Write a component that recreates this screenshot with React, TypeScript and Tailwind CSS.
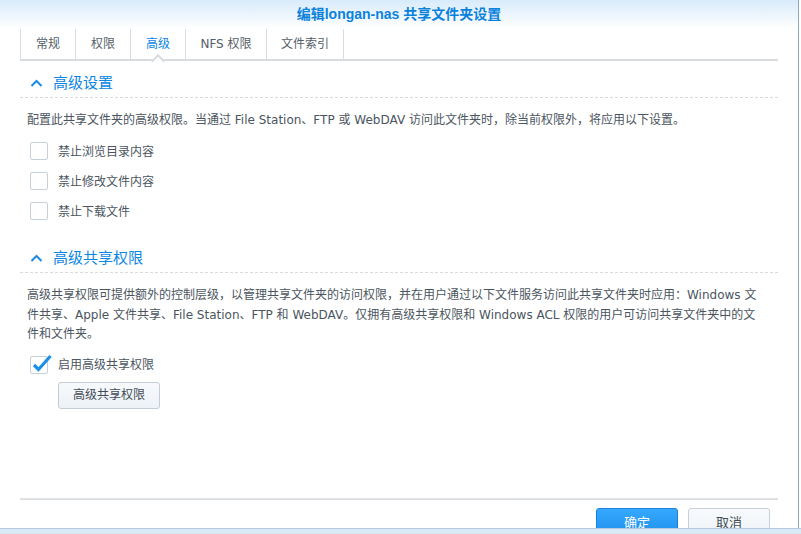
import { useState } from 'react'

const TABS = [
  { label: '常规', w: 'w-[55px]' },
  { label: '权限', w: 'w-[55px]' },
  { label: '高级', w: 'w-[55px]' },
  { label: 'NFS 权限', w: 'w-[81px]' },
  { label: '文件索引', w: 'w-[77px]' },
]

const ADV_OPTIONS = ['禁止浏览目录内容', '禁止修改文件内容', '禁止下载文件']

function Chevron() {
  return (
    <svg width="13" height="8" viewBox="0 0 13 8" className="mr-[10px] ml-[10px]">
      <path d="M1.5 7 L6.5 2 L11.5 7" fill="none" stroke="#1a8be4" strokeWidth="2" />
    </svg>
  )
}

function SectionHeader({ title }: { title: string }) {
  return (
    <div className="flex items-center h-[20px] pb-[4px] box-content border-b border-dashed border-[#d6dbe0]">
      <Chevron />
      <span className="text-[15px] text-[#0b86e3] leading-[20px]">{title}</span>
    </div>
  )
}

function Checkbox({ checked, onToggle }: { checked: boolean; onToggle: () => void }) {
  return (
    <button
      onClick={onToggle}
      className="relative w-[18px] h-[18px] border border-[#c5d0da] rounded-[2px] bg-white shrink-0"
    >
      {checked && (
        <svg width="20" height="18" viewBox="0 0 20 18" className="absolute left-[1px] top-[-3px]">
          <path d="M2 11 L6.5 15.5 L18.5 2" fill="none" stroke="#1b8fe9" strokeWidth="3.2" />
        </svg>
      )}
    </button>
  )
}

export default function App() {
  const [adv, setAdv] = useState([false, false, false])
  const [shareAdv, setShareAdv] = useState(true)

  return (
    <div className="w-[801px] h-[534px] bg-white overflow-hidden font-['DejaVu_Sans','Noto_Sans_CJK_SC',sans-serif] text-[12px] text-[#4b5560]">
      <div className="w-[799px] h-[528px] flex flex-col overflow-hidden border-r border-[#8ea7bb]">
        {/* header + tabs */}
        <div className="bg-linear-to-b from-[#d8ebfb] via-white via-[46%] to-white">
          <div className="h-[29px] flex items-center justify-center">
            <span className="text-[14px] font-bold text-[#0a82dc] font-['Liberation_Sans','Noto_Sans_CJK_SC',sans-serif]">
              编辑longan-nas 共享文件夹设置
            </span>
          </div>
          <div className="mx-[20px] h-[32px] flex border-b-2 border-[#d9dcdf]">
            {TABS.map(t => (
              <div
                key={t.label}
                className={`relative ${t.w} h-[30px] flex items-center justify-center border-l border-[#d5dde5] ${
                  t.label === '高级' ? 'text-[#0b86e3]' : 'text-[#555e67]'
                }`}
              >
                <span className="mt-[-1px]">{t.label}</span>
                {t.label === '高级' && (
                  <span className="absolute left-[22px] bottom-[-7px] w-[10px] h-[10px] rotate-45 bg-white border-l-2 border-t-2 border-[#d9dcdf]" />
                )}
              </div>
            ))}
            <div className="h-[30px] border-l border-[#d5dde5]" />
          </div>
        </div>

        {/* content */}
        <div className="flex-1 px-[20px]">
          <div className="mt-[12px]">
            <SectionHeader title="高级设置" />
          </div>
          <p className="mt-[12px] ml-[7px] leading-[20px] whitespace-nowrap">
            配置此共享文件夹的高级权限。当通过 File Station、FTP 或 WebDAV 访问此文件夹时，除当前权限外，将应用以下设置。
          </p>
          <div className="mt-[12px] ml-[10px] flex flex-col gap-[12px]">
            {ADV_OPTIONS.map((o, i) => (
              <div key={o} className="flex items-center gap-[10px] h-[18px]">
                <Checkbox checked={adv[i]} onToggle={() => setAdv(p => p.map((v, j) => (j === i ? !v : v)))} />
                <span className="mt-[1px]">{o}</span>
              </div>
            ))}
          </div>

          <div className="mt-[28px]">
            <SectionHeader title="高级共享权限" />
          </div>
          <div className="mt-[13px] ml-[7px] leading-[19.5px] whitespace-nowrap">
            <div>高级共享权限可提供额外的控制层级，以管理共享文件夹的访问权限，并在用户通过以下文件服务访问此共享文件夹时应用：Windows 文</div>
            <div>件共享、Apple 文件共享、File Station、FTP 和 WebDAV。仅拥有高级共享权限和 Windows ACL 权限的用户可访问共享文件夹中的文</div>
            <div>件和文件夹。</div>
          </div>
          <div className="mt-[11px] ml-[10px] flex items-center gap-[10px] h-[18px]">
            <Checkbox checked={shareAdv} onToggle={() => setShareAdv(v => !v)} />
            <span className="mt-[1px]">启用高级共享权限</span>
          </div>
          <button className="mt-[8px] ml-[38px] w-[102px] h-[27px] rounded-[3px] border border-[#c3cdd7] bg-linear-to-b from-[#f7f9fc] to-[#edf2f7] text-[#434c56]">
            高级共享权限
          </button>
        </div>

        {/* footer */}
        <div className="h-[30px] shrink-0 px-[20px]">
          <div className="h-[2px] bg-linear-to-b from-[#e6e8ea] to-[#d6d9dc]" />
          <div className="flex justify-end gap-[10px] pr-[8px] pt-[8px]">
            <button className="w-[82px] h-[30px] rounded-[3px] border border-[#1b80d6] bg-linear-to-b from-[#35a8ff] to-[#1d8fea] text-white text-[13px]">
              确定
            </button>
            <button className="w-[82px] h-[30px] rounded-[3px] border border-[#c6d0da] bg-linear-to-b from-[#f8fafc] to-[#eef3f8] text-[#444d57] text-[13px]">
              取消
            </button>
          </div>
        </div>
      </div>
      <div className="h-[6px] border-t border-[#b3c8dc] bg-[#dbe8f6]" />
    </div>
  )
}
